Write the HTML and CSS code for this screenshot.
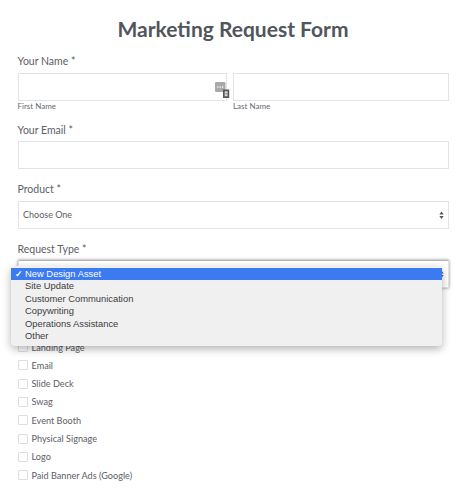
FILE: index.html
```html
<!DOCTYPE html>
<html lang="en">
<head>
<meta charset="utf-8">
<title>Marketing Request Form</title>
<link rel="stylesheet" href="styles.css">
</head>
<body>
<form class="form">
  <h1 class="title">Marketing Request Form</h1>

  <div class="field name">
    <div class="label">Your Name *</div>
    <div class="name-row">
      <div class="name-col first">
        <div class="input">
          <svg class="keychain" viewBox="0 0 15 16" width="15" height="16" aria-hidden="true">
            <rect x="0" y="0" width="10.5" height="10" rx="1.2" fill="#a9a9a9"/>
            <circle cx="2.8" cy="5" r=".8" fill="#fff"/>
            <circle cx="5.2" cy="5" r=".8" fill="#fff"/>
            <circle cx="7.6" cy="5" r=".8" fill="#fff"/>
            <rect x="8" y="7.5" width="6.2" height="8.5" fill="#555"/>
            <rect x="9.7" y="9.3" width="2.8" height="5" fill="#ddd"/>
            <rect x="10.3" y="11.3" width="1.6" height="1" fill="#666"/>
          </svg>
        </div>
        <div class="sub">First Name</div>
      </div>
      <div class="name-col last">
        <div class="input"></div>
        <div class="sub">Last Name</div>
      </div>
    </div>
  </div>

  <div class="field email">
    <div class="label">Your Email *</div>
    <div class="input"></div>
  </div>

  <div class="field product">
    <div class="label">Product *</div>
    <div class="input select">
      <span>Choose One</span>
      <svg class="arrows" viewBox="0 0 6 10" width="5" height="8.5" aria-hidden="true">
        <path d="M3 .5 5.6 4H.4zM3 9.5 .4 6h5.2z" fill="#555"/>
      </svg>
    </div>
  </div>

  <div class="field request">
    <div class="label">Request Type *</div>
    <div class="input select open">
      <svg class="arrows" viewBox="0 0 6 10" width="5" height="8.5" aria-hidden="true">
        <path d="M3 .5 5.6 4H.4zM3 9.5 .4 6h5.2z" fill="#555"/>
      </svg>
    </div>
  </div>

  <ul class="menu">
    <li class="option selected"><span class="check">✓</span>New Design Asset</li>
    <li class="option">Site Update</li>
    <li class="option">Customer Communication</li>
    <li class="option">Copywriting</li>
    <li class="option">Operations Assistance</li>
    <li class="option">Other</li>
  </ul>

  <ul class="checks">
    <li class="check-row"><span class="box"></span>Landing Page</li>
    <li class="check-row"><span class="box"></span>Email</li>
    <li class="check-row"><span class="box"></span>Slide Deck</li>
    <li class="check-row"><span class="box"></span>Swag</li>
    <li class="check-row"><span class="box"></span>Event Booth</li>
    <li class="check-row"><span class="box"></span>Physical Signage</li>
    <li class="check-row"><span class="box"></span>Logo</li>
    <li class="check-row"><span class="box"></span>Paid Banner Ads (Google)</li>
  </ul>
</form>
</body>
</html>
```

FILE: styles.css
```css
html, body {
  margin: 0;
  padding: 0;
  background: #fff;
  height: 489px;
  overflow: hidden;
}
.form {
  position: relative;
  padding: 0 25.5px 0 17.5px;
  font-family: Lato, "Liberation Sans", sans-serif;
  color: #5b6066;
}
.title {
  margin: 0;
  padding-top: 14px;
  height: 39px;
  line-height: 29px;
  font-size: 21px;
  font-weight: 700;
  text-align: center;
  color: #50565c;
  box-sizing: content-box;
}
.label {
  font-size: 10.5px;
  line-height: 16px;
  height: 16px;
  color: #5b6066;
}
.input {
  position: relative;
  box-sizing: border-box;
  height: 27.5px;
  border: 1px solid #e1e3e4;
  background: #fff;
}
.name .label,
.product .label {
  margin-bottom: 4px;
}
.email .label,
.request .label {
  margin-bottom: 3px;
}
.name-row {
  display: flex;
  gap: 6.5px;
}
.first {
  flex: 0 0 209px;
}
.last {
  flex: 1 1 0;
}
.sub {
  font-size: 8px;
  line-height: 10px;
  color: #666b70;
}
.keychain {
  position: absolute;
  right: -4px;
  top: 7.5px;
}
.email {
  margin-top: 11.5px;
}
.product,
.request {
  margin-top: 12.5px;
}
.select {
  display: flex;
  align-items: center;
  justify-content: space-between;
  padding: 0 4px 0 4.5px;
  font-size: 9px;
  color: #5b6066;
}
.select.open {
  border-top-color: #b5b5b5;
  box-shadow: 0 0 3px rgba(0, 0, 0, .45);
}
.arrows {
  margin-left: auto;
}
.menu {
  position: absolute;
  left: 11px;
  top: 266px;
  width: 431px;
  height: 80px;
  margin: 0;
  padding: 2px 0 0;
  box-sizing: border-box;
  list-style: none;
  background: #f0f0f0;
  border-radius: 4px;
  box-shadow: 0 3px 9px rgba(0, 0, 0, .3);
  font-family: "Liberation Sans", Arial, sans-serif;
  font-size: 9.4px;
  color: #3c3c3c;
  z-index: 2;
}
.option {
  position: relative;
  height: 12.45px;
  line-height: 12.45px;
  padding-left: 14px;
}
.selected {
  background: #3b7af0;
  color: #fff;
}
.check {
  position: absolute;
  left: 4px;
  font-size: 9px;
  font-weight: 700;
}
.checks {
  list-style: none;
  margin: 50.4px 0 0;
  padding: 0;
}
.check-row {
  display: flex;
  align-items: center;
  height: 18.3px;
  font-size: 9.15px;
  color: #5b6066;
}
.box {
  box-sizing: border-box;
  width: 10px;
  height: 10px;
  margin-right: 4px;
  border: 1px solid #dcdedf;
  border-radius: 1px;
  background: #fff;
}
```
